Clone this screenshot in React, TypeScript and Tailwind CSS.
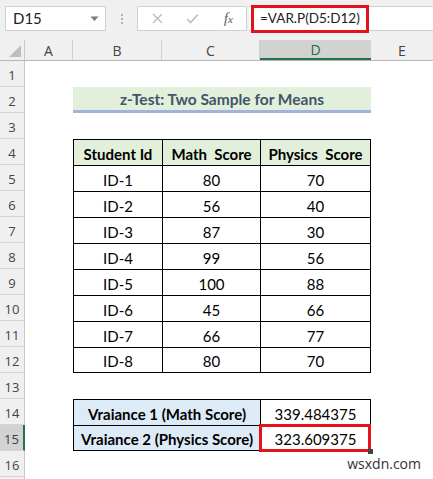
import { ReactNode } from "react";

const cellFont = { fontFamily: "Lato, 'Liberation Sans', sans-serif" };
const uiFont = { fontFamily: "'Open Sans', 'Noto Sans', sans-serif" };

function RowHead({ n, selected }: { n?: number; selected?: boolean }) {
  return (
    <div
      className={
        "w-[25px] shrink-0 flex items-center justify-center pt-[5px] text-[13px] border-b border-[#d6d6d6] " +
        (selected
          ? "bg-[#d2d2d2] text-[#3c3c3c] border-r-2 border-r-[#217346]"
          : "bg-[#f0f0f0] text-[#444] border-r border-r-[#c8c8c8]")
      }
      style={uiFont}
    >
      {n}
    </div>
  );
}

function Row({ n, selected, children }: { n?: number; selected?: boolean; children?: ReactNode }) {
  return (
    <div className="flex h-[26px]">
      <RowHead n={n} selected={selected} />
      <div className="flex flex-1 bg-white" style={cellFont}>
        <div className="w-[48px] shrink-0" />
        {children}
      </div>
    </div>
  );
}

function DataRow({ n, id, math, phys, last }: { n: number; id: string; math: number; phys: number; last?: boolean }) {
  const b = last ? " border-b" : "";
  return (
    <Row n={n}>
      <div className={"w-[89px] flex items-center justify-center pt-[3px] text-[15px] border-l border-t border-black" + b}>{id}</div>
      <div className={"w-[98px] flex items-center justify-center pt-[3px] text-[15px] border-l border-t border-black" + b}>{math}</div>
      <div className={"w-[111px] flex items-center justify-center pt-[3px] text-[15px] border-l border-t border-r border-black" + b}>{phys}</div>
    </Row>
  );
}

const data = [
  ["ID-1", 80, 70],
  ["ID-2", 56, 40],
  ["ID-3", 87, 30],
  ["ID-4", 99, 56],
  ["ID-5", 100, 88],
  ["ID-6", 45, 66],
  ["ID-7", 66, 77],
  ["ID-8", 80, 70]
] as const;

export default function App() {
  return (
    <div className="w-[433px] h-[479px] overflow-hidden bg-white relative">
      {/* formula bar */}
      <div className="h-[40px] bg-[#f0f0f0] flex items-start pt-[6px] pl-[5px]">
        <div className="w-[101px] h-[25px] bg-white border border-[#d0d0d0] flex items-center justify-between pl-[7px] pr-[6px]">
          <span className="text-[15px] text-[#222]" style={cellFont}>D15</span>
          <svg width="9" height="6" viewBox="0 0 9 6">
            <path d="M0.5 0.5 L8.5 0.5 L4.5 5 Z" fill="#7a7a7a" />
          </svg>
        </div>
        <div className="w-[31px] h-[25px] flex flex-col items-center justify-center gap-[2px]">
          <span className="w-[2px] h-[2px] bg-[#b0b0b0]" />
          <span className="w-[2px] h-[2px] bg-[#b0b0b0]" />
          <span className="w-[2px] h-[2px] bg-[#b0b0b0]" />
        </div>
        <div className="w-[110px] h-[25px] bg-white border border-[#d0d0d0] flex items-center pl-[14px]">
          <svg width="11" height="11" viewBox="0 0 11 11">
            <path d="M1 1 L10 10 M10 1 L1 10" stroke="#bdbdbd" strokeWidth="1.4" />
          </svg>
          <svg width="13" height="11" viewBox="0 0 13 11" className="ml-[23px]">
            <path d="M1 6 L4.5 9.5 L12 1.5" stroke="#bdbdbd" strokeWidth="1.6" fill="none" />
          </svg>
          <span className="ml-[25px] text-[14px] italic text-[#555]" style={{ fontFamily: "'Liberation Serif', serif" }}>
            f<span className="text-[11px]">x</span>
          </span>
        </div>
        <div className="ml-[2px] flex-1 h-[25px] bg-white border-y border-[#d0d0d0] relative flex items-center pl-[11px]">
          <span className="text-[13.5px] text-[#222]" style={cellFont}>=VAR.P(D5:D12)</span>
          <div className="absolute left-[2px] -top-[2px] w-[118px] h-[28px] border-[3px] border-[#e3121b]" />
        </div>
      </div>

      {/* column headers */}
      <div className="flex h-[21px] bg-[#f0f0f0] border-b border-[#b8b8b8] text-[14px] text-[#444]" style={uiFont}>
        <div className="w-[25px] border-r border-[#c8c8c8] flex items-end justify-end pr-[3px] pb-[3px]">
          <svg width="12" height="12" viewBox="0 0 12 12">
            <path d="M12 0 L12 12 L0 12 Z" fill="#bfbfbf" />
          </svg>
        </div>
        <div className="w-[48px] border-r border-[#d0d0d0] flex items-center justify-center">A</div>
        <div className="w-[89px] border-r border-[#d0d0d0] flex items-center justify-center">B</div>
        <div className="w-[98px] border-r border-[#d0d0d0] flex items-center justify-center">C</div>
        <div className="w-[111px] bg-[#d2d2d2] border-b-2 border-[#217346] text-[#1f6b43] flex items-center justify-center">D</div>
        <div className="w-[62px] flex items-center justify-center">E</div>
      </div>

      <Row n={1} />
      <Row n={2}>
        <div className="w-[298px] bg-[#e2efda] border-b-[3px] border-[#9fb3dc] flex items-center justify-center pt-[2px] text-[15.5px] font-bold text-[#44546a]">
          z-Test: Two Sample for Means
        </div>
      </Row>
      <Row n={3} />
      <Row n={4}>
        <div className="w-[89px] bg-[#e2efda] flex items-center justify-center pt-[3px] text-[15px] font-bold border-l border-t border-black">Student Id</div>
        <div className="w-[98px] bg-[#e2efda] flex items-center justify-center pt-[3px] text-[15px] font-bold border-l border-t border-black whitespace-pre">Math  Score</div>
        <div className="w-[111px] bg-[#e2efda] flex items-center justify-center pt-[3px] text-[15px] font-bold border-l border-t border-r border-black whitespace-pre">Physics  Score</div>
      </Row>
      {data.map((d, i) => (
        <DataRow key={d[0]} n={i + 5} id={d[0]} math={d[1]} phys={d[2]} last={i === data.length - 1} />
      ))}
      <Row n={13} />
      <Row n={14}>
        <div className="w-[187px] bg-[#ddebf7] flex items-center justify-center pt-[3px] text-[15px] font-bold border-l border-t border-black">Vraiance 1 (Math Score)</div>
        <div className="w-[111px] flex items-center justify-center pt-[3px] text-[15px] border-l border-t border-r border-black">339.484375</div>
      </Row>
      <Row n={15} selected>
        <div className="w-[187px] bg-[#ddebf7] flex items-center justify-center pt-[3px] text-[15px] font-bold border-l border-t border-b border-black">Vraiance 2 (Physics Score)</div>
        <div className="w-[111px] relative flex items-center justify-center pt-[3px] text-[15px] border-l border-t border-r border-b border-black">
          323.609375
          <div className="absolute -left-[2px] -top-[2px] -right-[1px] -bottom-[2px] border-[3px] border-[#e3121b]" />
          <div className="absolute -right-[3px] -bottom-[4px] w-[5px] h-[5px] bg-[#3a4a3e]" />
        </div>
      </Row>
      <Row n={16} />
      <Row />

      <div className="absolute right-[12px] bottom-[5px] text-[14px] text-[#333]" style={uiFont}>wsxdn.com</div>
    </div>
  );
}
